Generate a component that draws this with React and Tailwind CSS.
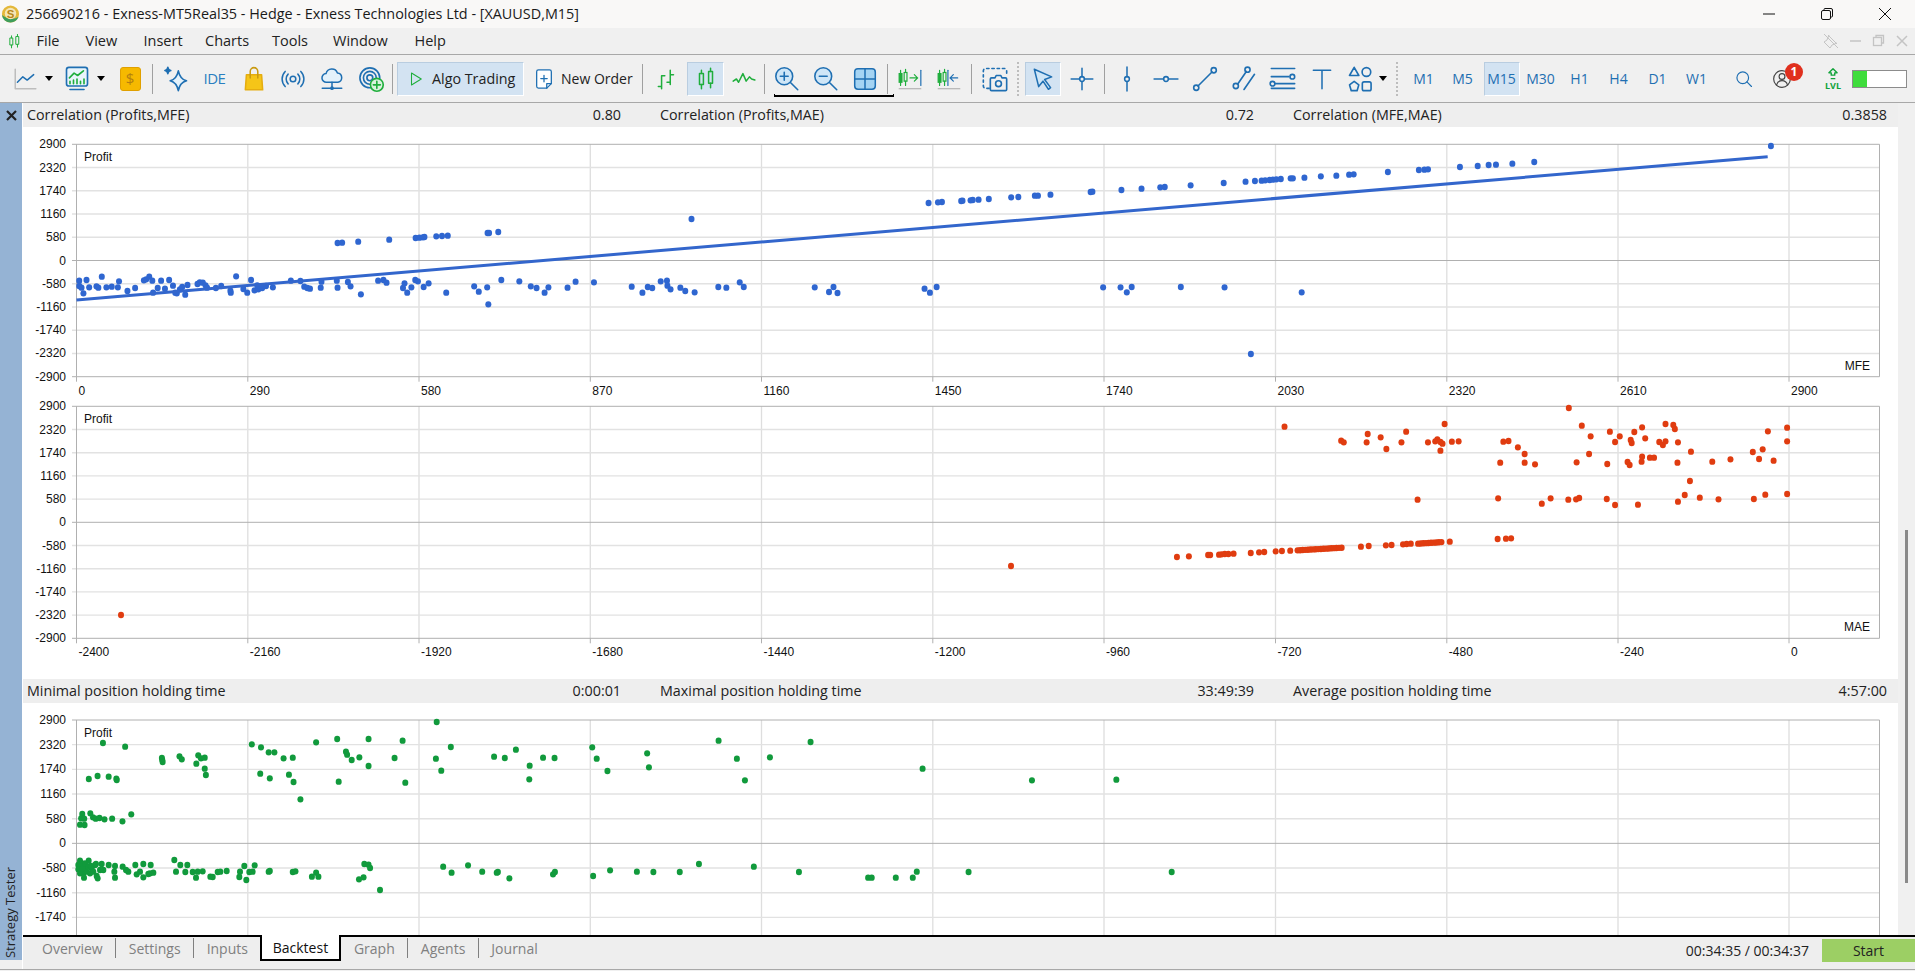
import React from 'react'

const BLUE = '#1f6fb2'
const GREEN = '#1fae3c'
const LIGHT = '#cfe6f7'

// dots were read from crops of the chart: x is scaled by sx, y always by 3
const crop = (ox, oy, sx, text) =>
  text.trim().split(/\s+/).map((pair) => {
    const [x, y] = pair.split(',').map(Number)
    return [ox + x / sx, oy + y / 3]
  })

const mfeDots = [
  ...crop(0, 130, 2.613, `207,452 207,468 213,473 218,490 226,450 233,472 252,469 257,473 266,440 278,472 292,470 308,472 311,454 333,483 353,474 376,451 382,448 390,440 398,452 400,488 412,474 421,452 431,476 442,450 452,467 458,488 462,490 470,478 484,494 490,465 476,471 516,462 522,457 530,458 537,466 541,473 564,474 578,468 602,482 603,488 617,439 636,477 646,488 656,450 665,481 675,478 672,466 685,474 695,468 713,472 760,452 785,453 795,470 803,474 810,476 838,473 840,455 880,452 882,473 909,456 916,469 943,493 988,452 1002,450 1010,458 1053,474 1057,460 1064,488 1075,472 1085,450 1092,454 1107,471 1120,460 1166,488 1239,469 1251,485 1273,472 1276,523 1310,450 1357,454 1387,469 1402,474 1423,488 1433,472 1483,473 1504,455 1552,457
    882,339 894,338 936,335 1017,329 1086,324 1096,323 1105,322 1109,321 1140,319 1155,318 1170,317 1274,309 1278,309 1302,306`),
  ...crop(600, 140, 2.24, `205,237 71,440 95,458 107,441 117,444 136,424 150,422 151,437 158,448 180,443 191,453 212,457 265,441 283,443 313,427 322,441 481,442 513,456 523,441 532,459 727,446 739,458 754,441 1127,442 1166,442 1180,457 1191,441 1301,441 1399,442 1458,642
    736,189 757,187 766,186 809,183 812,182 830,181 835,180 848,179 871,177 921,172 937,171 974,167 981,167 1009,164 1099,156 1103,155 1168,150 1213,146 1255,142 1265,141 1323,136 1397,129 1446,125 1467,123 1482,122 1490,121 1500,120 1507,119 1515,118 1525,117 1547,115 1552,115`),
  ...crop(1200, 130, 2.193, `229,143 265,139 299,137 327,134 337,133 412,126 480,120 492,119 500,118 570,111 609,108 633,105 649,104 685,101 733,96 1252,48 223,487`),
]

// the packed stretch of the MAE curve reads as one thick line
const maePacked = []
for (let x = 380; x <= 466; x += 5) maePacked.push(`${x},${451 - ((x - 380) / 86) * 8}`)
for (let x = 612; x <= 660; x += 5) maePacked.push(`${x},${431 - ((x - 612) / 48) * 5}`)

const maeDots = [
  ...crop(1100, 400, 1.924, `355,80 464,122 469,127 513,127 515,102 540,112 551,147 580,127 589,95 631,127 645,124 649,118 655,126 659,131 655,152 663,72 677,125 690,124 770,188 776,125 786,123 804,142 817,162 817,188 837,193 902,24 917,187 927,77 941,162 944,109 976,192 981,95 991,126 1000,109 1015,186 1019,195 1021,120 1023,129 1028,96 1042,185 1043,170 1043,82 1049,115 1058,173 1066,173 1076,126 1083,135 1088,124 1088,72 1103,75 1106,87 1111,188 1112,127 1137,155 1178,185 1213,178 1256,156 1268,177 1275,148 1285,94 1296,182 1322,83 1322,124
    611,299 766,295 850,311 867,295 901,299 916,298 922,294 975,297 991,315 1035,314 1112,305 1125,285 1135,243 1154,293 1190,298 1258,297 1280,284 1322,282
    148,471 171,469 208,465 212,465 229,464 234,463 240,462 247,462 257,461 290,459 306,457 316,456 338,454 350,453 366,452 502,440 517,438 550,436 561,435 583,433 590,432 598,431 673,425 765,417 781,416 791,415 ${maePacked.join(' ')}`),
  [1011, 566],
  [121, 615],
]

const timeDots = [
  ...crop(0, 700, 2.613, `269,129 327,140 232,237 255,228 284,230 304,236 305,240 423,174 424,180 425,186 469,169 475,178 518,166 525,175 535,173 513,191 535,206 538,225 658,133 682,142 702,157 717,157 741,175 765,173 680,221 705,235 755,224 767,246 785,298 826,127 881,117 885,245 904,155 907,164 919,180 939,172 963,117 963,198 1052,122 1031,174 1059,248 1141,66 1139,176 1178,141 1153,212 1291,170 1319,174 1348,149 1384,197 1383,238 1419,173 1449,174
    215,342 212,355 220,356 209,374 221,375 236,340 243,352 250,356 260,354 273,358 293,356 320,364 343,343
    702,515 705,513 765,516 772,514 815,530 826,518 832,530 938,538 950,532 952,492 963,494 967,504 993,570 1158,500 1180,518 1223,496 1260,515 1298,518 1301,516 1331,535 1445,523 1450,516`),
  ...crop(60, 840, 3, `60,62 58,80 65,70 62,90 70,100 72,113 75,85 80,95 86,62 90,100 95,85 105,75 110,108 113,115 125,72 120,90 130,90 146,75 165,78 188,80 198,90 205,95 163,95 165,113 226,75 230,103 240,95 250,72 250,112 272,75 270,100 280,98 265,102 343,60 361,75 382,75 348,95 376,96 398,96 408,113 413,95 428,94 451,110 458,111 473,96 481,95 500,93 540,95 538,111 553,78 559,120 568,96 578,95 584,76 55,75 55,88 60,100 68,85 75,70 85,80 92,78 100,95 108,72`),
  ...crop(590, 715, 2.24, `5,97 15,131 39,168 128,115 132,157 288,77 329,131 347,196 403,127 494,81 745,161 990,196 1179,194 7,483 45,466 105,470 142,471 201,471 244,447 367,455 468,471 623,488 631,488 685,488 723,488 732,470 848,471 1303,471`),
]

const yValues = [2900, 2320, 1740, 1160, 580, 0, -580, -1160, -1740, -2320, -2900]
const GRID_X = [76.5, 247.8, 419, 590.3, 761.5, 932.8, 1104, 1275.5, 1446.8, 1618, 1789]
const PLOT_LEFT = 76.5
const PLOT_RIGHT = 1879.5

function ScatterChart({ top, height, heightClass, plotTop, step, rows = 11, xLabels, axisName, color, dots, profitY, trend }) {
  const values = yValues.slice(0, rows)
  const zeroIndex = values.indexOf(0)
  const plotBottom = plotTop + step * (rows - 1)
  return (
    <svg className={`block w-[1875px] shrink-0 bg-white ${heightClass}`} viewBox={`23 ${top} 1875 ${height}`}>
      {GRID_X.slice(1, 11).map((x) => (
        <line key={x} x1={x} x2={x} y1={plotTop} y2={xLabels ? plotBottom : top + height} stroke="#dedede" strokeWidth="1.3" />
      ))}
      {values.map((v, i) => {
        const y = plotTop + i * step
        const strong = i === zeroIndex || i === 0 || i === 10
        return (
          <g key={v}>
            <line x1={72} x2={PLOT_RIGHT} y1={y} y2={y} stroke={strong ? '#b0b0b0' : '#e2e2e2'} strokeWidth={strong ? 1 : 1.4} />
            <text x="66" y={y + 4} textAnchor="end" className="fill-[#111] text-[12px]" fontFamily="Liberation Sans, sans-serif">{v}</text>
          </g>
        )
      })}
      <line x1={PLOT_LEFT} x2={PLOT_LEFT} y1={plotTop} y2={xLabels ? plotBottom : top + height} stroke="#b0b0b0" />
      <line x1={PLOT_RIGHT} x2={PLOT_RIGHT} y1={plotTop} y2={xLabels ? plotBottom : top + height} stroke="#b0b0b0" />
      {xLabels && xLabels.map((label, i) => (
        <g key={label}>
          <line x1={GRID_X[i]} x2={GRID_X[i]} y1={plotBottom} y2={plotBottom + 5} stroke="#b0b0b0" />
          <text x={GRID_X[i] + 2} y={plotBottom + 18} className="fill-[#111] text-[12px]" fontFamily="Liberation Sans, sans-serif">{label}</text>
        </g>
      ))}
      <text x="84" y={profitY} className="fill-[#111] text-[12px]" fontFamily="Liberation Sans, sans-serif">Profit</text>
      {axisName && (
        <text x="1870" y={plotBottom - 7} textAnchor="end" className="fill-[#111] text-[12px]" fontFamily="Liberation Sans, sans-serif">{axisName}</text>
      )}
      {dots.map(([x, y], i) => (
        <ellipse key={i} cx={x} cy={y} rx="3" ry="3.2" fill={color} />
      ))}
      {trend && <line x1={trend[0]} y1={trend[1]} x2={trend[2]} y2={trend[3]} stroke="#3366cc" strokeWidth="3" />}
    </svg>
  )
}

function StatRow({ cells }) {
  return (
    <div className="flex h-[24px] shrink-0 items-center bg-[#eeeeee] pl-[4px] text-[14.3px] text-[#222]">
      {cells.map(([label, value]) => (
        <div key={label} className="mr-[39px] flex w-[594px] shrink-0 justify-between">
          <span>{label}</span>
          <span>{value}</span>
        </div>
      ))}
    </div>
  )
}

function Icon({ size = 26, children, viewBox = '0 0 24 24' }) {
  return (
    <svg width={size} height={size} viewBox={viewBox} fill="none" stroke={BLUE} strokeWidth="1.4" strokeLinecap="round" strokeLinejoin="round">
      {children}
    </svg>
  )
}

function Slot({ w, children, active }) {
  return (
    <div className={`flex h-[34px] shrink-0 items-center justify-center ${w} ${active ? 'border border-[#b9cde0] border-r-white border-b-white bg-[#d3e3f2]' : ''}`}>
      {children}
    </div>
  )
}

const Sep = () => <div className="h-[30px] w-px shrink-0 bg-[#a0a0a0]" />
const DotSep = () => <div className="h-[34px] w-[2px] shrink-0 border-l-2 border-dotted border-[#bdbdbd]" />
const Gap = ({ w }) => <div className={`shrink-0 ${w}`} />
const Caret = () => <div className="h-0 w-0 border-x-[4.5px] border-t-[5px] border-x-transparent border-t-black" />

const Candles = ({ color = GREEN, size = 26 }) => (
  <Icon size={size}>
    <g stroke={color}>
      <rect x="6" y="7" width="3.6" height="10" />
      <rect x="14.4" y="5" width="3.6" height="11" />
      <path d="M7.8 4v3M7.8 17v4M16.2 2v3M16.2 16v4" />
    </g>
  </Icon>
)

const MoveIcon = ({ back }) => (
  <svg width="26" height="26" viewBox="0 0 24 24" fill="none" strokeWidth="1.1" strokeLinecap="round">
    <g stroke={GREEN}>
      <rect x="2" y="7" width="2.6" height="8" fill={GREEN} />
      <rect x="6.6" y="6" width="2.6" height="8" />
      <path d="M3.3 4v3M3.3 15v3M7.9 3v3M7.9 14v4" />
    </g>
    <path d={back ? 'M20 11h-7M16 8l-3 3 3 3' : 'M12 11h7M16 8l3 3-3 3'} stroke={back ? BLUE : GREEN} />
    <path d={back ? 'M11 4v14' : 'M22 4v14'} stroke={BLUE} />
    <path d="M2 21h20" stroke="#a8a8a8" />
  </svg>
)

function Toolbar() {
  return (
    <div className="relative flex h-[49px] shrink-0 items-center border-t border-b border-[#a8a8a8] bg-[#f0f0f0] pl-[12px]">
      <Slot w="w-[26px]">
        <Icon size={26}><path d="M3 3v18h19" stroke="#bdbdbd" /><path d="M5 15l5-5 4 3 6-5" /></Icon>
      </Slot>
      <Slot w="w-[22px]"><Caret /></Slot>
      <Slot w="w-[34px]">
        <Icon size={28}>
          <rect x="3" y="2" width="18" height="16" rx="2" fill="#e9f4fb" />
          <path d="M5.5 11l4-4 3 2 5-4" stroke={GREEN} />
          <path d="M6 16v-2M9 16v-3M12 16v-4M15 16v-2M18 16v-4" stroke={GREEN} />
          <path d="M6 21h12" />
        </Icon>
      </Slot>
      <Slot w="w-[14px]"><Caret /></Slot>
      <Slot w="w-[44px]">
        <div className="flex h-[24px] w-[21px] items-center justify-center rounded-[3px] border border-[#e0a000] bg-[#f6b900] text-[15px] text-[#b47f10]">$</div>
      </Slot>
      <Sep />
      <Gap w="w-[3px]" />
      <Slot w="w-[39px]">
        <Icon size={28}>
          <path d="M14 5c1 5 3 7.5 7 8.5-4 1-6 3.5-7 8.5-1-5-3-7.5-7-8.5 4-1 6-3.5 7-8.5z" fill="#e4f2fb" />
          <path d="M5 2c.3 1.7 1 2.4 2.5 2.7C6 5 5.3 5.7 5 7.4 4.7 5.7 4 5 2.5 4.7 4 4.4 4.7 3.7 5 2z" fill={BLUE} />
        </Icon>
      </Slot>
      <Slot w="w-[39px]"><span className="text-[15px] tracking-[-0.5px] text-[#2a7fc0]">IDE</span></Slot>
      <Slot w="w-[39px]">
        <Icon size={26}>
          <path d="M5 8h14l1 14H4z" fill="#f5c518" stroke="#e5ad10" />
          <path d="M8.5 11V5a3.5 3.5 0 0 1 7 0v6" stroke="#c99a10" />
        </Icon>
      </Slot>
      <Slot w="w-[39px]">
        <Icon size={26}>
          <circle cx="12" cy="12" r="2.6" />
          <path d="M7.5 7.5a6.5 6.5 0 0 0 0 9M16.5 7.5a6.5 6.5 0 0 1 0 9M4.8 5a10 10 0 0 0 0 14M19.2 5a10 10 0 0 1 0 14" />
        </Icon>
      </Slot>
      <Slot w="w-[39px]">
        <Icon size={26}>
          <path d="M7 15a4 4 0 0 1-.5-8A5.5 5.5 0 0 1 17 6.5a4.3 4.3 0 0 1 .5 8.5z" fill="#e4f2fb" />
          <path d="M12 15v5M3 20.5h18" />
          <circle cx="12" cy="20.5" r="1" fill={BLUE} />
        </Icon>
      </Slot>
      <Slot w="w-[39px]">
        <Icon size={28}>
          <circle cx="11" cy="11" r="8.5" />
          <circle cx="11" cy="11" r="5.5" />
          <circle cx="11" cy="11" r="2.5" />
          <circle cx="17" cy="17" r="5.5" fill="#d8f2dc" stroke={GREEN} />
          <path d="M17 14v6M14 17h6" stroke={GREEN} />
        </Icon>
      </Slot>
      <Gap w="w-[2px]" />
      <Sep />
      <div className="ml-[4px] flex h-[34px] w-[127px] shrink-0 items-center border border-[#b9cde0] border-r-white border-b-white bg-[#d3e3f2] pl-[9px] text-[14.3px] text-[#222]">
        <Icon size={18}><path d="M6 4l13 8-13 8z" stroke={GREEN} /></Icon>
        <span className="ml-[7px] whitespace-nowrap">Algo Trading</span>
      </div>
      <div className="flex w-[118px] shrink-0 items-center pl-[9px] text-[14px] text-[#222]">
        <Icon size={22}>
          <path d="M6 2h12a2 2 0 0 1 2 2v13l-5 5H6a2 2 0 0 1-2-2V4a2 2 0 0 1 2-2z" fill="#fff" />
          <path d="M12 8v7M8.5 11.5h7M20 17h-5v5" />
        </Icon>
        <span className="ml-[6px] whitespace-nowrap">New Order</span>
      </div>
      <Sep />
      <Gap w="w-[4px]" />
      <Slot w="w-[40px]">
        <Icon size={26}><path d="M4 19h3M7 21V9M7 9h3M15 15h-3M15 17V4M15 8h3" stroke={GREEN} /></Icon>
      </Slot>
      <Slot w="w-[37px]" active><Candles /></Slot>
      <Slot w="w-[40px]">
        <Icon size={26}><path d="M2 14l3-2 2 3 4-8 3 7 3-4 2 2 3 1" stroke={GREEN} /></Icon>
      </Slot>
      <Sep />
      <Gap w="w-[2px]" />
      <Slot w="w-[38px]">
        <Icon size={27}>
          <circle cx="10" cy="10" r="7.5" fill={LIGHT} />
          <path d="M10 6.5v7M6.5 10h7M15.5 15.5L22 22" />
        </Icon>
      </Slot>
      <Slot w="w-[41px]">
        <Icon size={27}>
          <circle cx="10" cy="10" r="7.5" fill={LIGHT} />
          <path d="M6.5 10h7M15.5 15.5L22 22" />
        </Icon>
      </Slot>
      <Slot w="w-[38px]">
        <Icon size={26}>
          <rect x="2.5" y="2.5" width="19" height="19" rx="3" fill="#a5d4f3" />
          <path d="M12 2.5v19M2.5 12h19" />
        </Icon>
      </Slot>
      <Gap w="w-[3px]" />
      <Sep />
      <Slot w="w-[44px]"><MoveIcon /></Slot>
      <Slot w="w-[34px]"><MoveIcon back /></Slot>
      <Gap w="w-[5px]" />
      <Sep />
      <Slot w="w-[45px]">
        <Icon size={28}>
          <path d="M7 20H4a2 2 0 0 1-2-2V5a2 2 0 0 1 2-2h16a2 2 0 0 1 2 2v4" strokeDasharray="2 2.5" />
          <path d="M9 11h3l1-2h4l1 2h3a1 1 0 0 1 1 1v9a1 1 0 0 1-1 1H9a1 1 0 0 1-1-1v-9a1 1 0 0 1 1-1z" />
          <circle cx="15" cy="16" r="2.5" />
        </Icon>
      </Slot>
      <DotSep />
      <Gap w="w-[6px]" />
      <Slot w="w-[36px]" active>
        <Icon size={26}><path d="M4 3l16 7-6.5 2.5L19 20l-2 1.5-5-7.5-4 5z" fill={LIGHT} /></Icon>
      </Slot>
      <Slot w="w-[42px]">
        <Icon size={26}><circle cx="12" cy="12" r="2.2" /><path d="M12 2v7.800M12 14.200V22M2 12h7.800M14.200 12H22" /></Icon>
      </Slot>
      <Gap w="w-px" />
      <Sep />
      <Slot w="w-[44px]"><Icon size={26}><circle cx="12" cy="12" r="2.2" /><path d="M12 1v8.800M12 14.200V23" /></Icon></Slot>
      <Slot w="w-[34px]"><Icon size={26}><circle cx="12" cy="12" r="2.2" /><path d="M1 12h8.800M14.200 12H23" /></Icon></Slot>
      <Slot w="w-[44px]"><Icon size={28}><circle cx="4.5" cy="19.5" r="2.2" /><circle cx="19.5" cy="4.5" r="2.2" /><path d="M6 18L18 6" /></Icon></Slot>
      <Slot w="w-[34px]"><Icon size={28}><circle cx="5" cy="18" r="2.2" /><circle cx="15" cy="4" r="2.2" /><path d="M6.5 16.5L14 5.5M21 8l-9 13" /></Icon></Slot>
      <Slot w="w-[44px]">
        <Icon size={28}>
          <path d="M2 3h20M2 10h15M2 20h20" />
          <circle cx="20" cy="10" r="2" />
          <path d="M5 16h17" />
          <circle cx="3" cy="16" r="2" />
        </Icon>
      </Slot>
      <Slot w="w-[34px]"><Icon size={26}><path d="M4 4h16M12 4v17" /></Icon></Slot>
      <Gap w="w-[3px]" />
      <Slot w="w-[36px]">
        <Icon size={28}>
          <path d="M7 2l4 7H3z" />
          <circle cx="17.5" cy="6" r="3.7" />
          <path d="M7 14l4 3-1.500 5h-5L3 17z" />
          <rect x="14" y="14.5" width="7.5" height="7.5" rx="1.5" />
        </Icon>
      </Slot>
      <Slot w="w-[10px]"><Caret /></Slot>
      <Gap w="w-[8px]" />
      <DotSep />
      <Gap w="w-[6px]" />
      {['M1', 'M5', 'M15', 'M30', 'H1', 'H4', 'D1', 'W1'].map((label) => (
        <div key={label} className="flex w-[39px] shrink-0 justify-center">
          <div className={`flex h-[34px] w-[36px] items-center justify-center whitespace-nowrap text-[14px] text-[#1f6fb2] ${label === 'M15' ? 'border border-[#b9cde0] border-r-white border-b-white bg-[#d3e3f2]' : ''}`}>
            {label}
          </div>
        </div>
      ))}
      <Slot w="w-[55px]"><Icon size={20}><circle cx="10.5" cy="10.5" r="7" /><path d="M15.5 15.5L21 21" /></Icon></Slot>
      <div className="relative flex w-[22px] shrink-0 justify-center">
        <Icon size={20}>
          <g stroke="#444">
            <circle cx="12" cy="12" r="10" />
            <circle cx="12" cy="9" r="3.5" />
            <path d="M5.5 19c1-3.5 3.5-5 6.5-5s5.5 1.5 6.5 5" />
          </g>
        </Icon>
        <div className="absolute top-[-6px] left-[14px] flex h-[18px] w-[18px] items-center justify-center rounded-full bg-[#e0301e] text-[12px] font-bold text-white">1</div>
      </div>
      <div className="ml-[25px] flex w-[30px] shrink-0 flex-col items-center text-[9px] leading-[10px] font-bold text-[#12a33a]">
        <Icon size={14}><path d="M12 3l7 7h-4v4H9v-4H5zM9 20h6" stroke="#12a33a" strokeWidth="2.4" /></Icon>
        <span>LVL</span>
      </div>
      <div className="ml-[4px] flex h-[18px] w-[55px] shrink-0 border border-[#8c8c8c] bg-white">
        <div className="w-[14px] bg-[#3fdc3c]" />
      </div>
      <div className="absolute top-[39px] left-[774px] h-[3px] w-[120px] border-x border-b-2 border-black" />
    </div>
  )
}

function TitleBar() {
  return (
    <div className="flex h-[28px] shrink-0 items-center bg-[#f9f8f7] text-[14.4px] text-[#1a1a1a]">
      <svg width="19" height="20" viewBox="0 0 20 20" className="ml-[1px] shrink-0">
        <circle cx="10" cy="10" r="9" fill="#e4b83a" />
        <path d="M1 11a9 9 0 0 0 9 8c4 0 7-2 8.5-6-4 3-11 3-17.5-2z" fill="#3f9e5c" />
        <circle cx="10" cy="9.5" r="6" fill="#f5e6b5" />
        <text x="10" y="14" textAnchor="middle" fontSize="12" fontWeight="700" fill="#b8861a" fontFamily="Liberation Sans, sans-serif">S</text>
      </svg>
      <span className="ml-[6px] whitespace-nowrap">256690216 - Exness-MT5Real35 - Hedge - Exness Technologies Ltd - [XAUUSD,M15]</span>
      <div className="ml-auto flex items-center">
        <div className="flex w-[58px] justify-center">
          <svg width="14" height="14" viewBox="0 0 14 14"><path d="M1 7h12" stroke="#111" /></svg>
        </div>
        <div className="flex w-[58px] justify-center">
          <svg width="14" height="14" viewBox="0 0 14 14" fill="none" stroke="#111"><rect x="1.5" y="3.5" width="9" height="9" rx="1.5" /><path d="M4 3V2.5a1 1 0 0 1 1-1h6a1.5 1.5 0 0 1 1.5 1.5v6a1 1 0 0 1-1 1H11" /></svg>
        </div>
        <div className="mr-px flex w-[58px] justify-center">
          <svg width="14" height="14" viewBox="0 0 14 14"><path d="M1 1l12 12M13 1L1 13" stroke="#111" /></svg>
        </div>
      </div>
    </div>
  )
}

function MenuBar() {
  const items = [
    ['File', 'w-[49px]'],
    ['View', 'w-[58px]'],
    ['Insert', 'w-[61.5px]'],
    ['Charts', 'w-[67px]'],
    ['Tools', 'w-[61px]'],
    ['Window', 'w-[81.5px]'],
    ['Help', 'w-[60px]'],
  ]
  return (
    <div className="flex h-[26px] shrink-0 items-center bg-[#f0f0f0] text-[14.5px] text-[#222]">
      <div className="ml-[6px] w-[30.5px] shrink-0">
        <Candles size={17} />
      </div>
      {items.map(([label, w]) => (
        <div key={label} className={`shrink-0 ${w}`}>{label}</div>
      ))}
      <div className="mr-[5px] ml-auto flex items-center gap-[7px]">
        <div className="w-[19px]">
          <svg width="18" height="18" viewBox="0 0 18 18" fill="none" stroke="#c4c4c4"><path d="M2 2l14 14M6 3l9 9M7 3l-2 5-3 2 6 6 2-3 5-2" /></svg>
        </div>
        <svg width="16" height="14" viewBox="0 0 16 14"><path d="M2 7h11" stroke="#c4c4c4" strokeWidth="1.5" /></svg>
        <svg width="16" height="14" viewBox="0 0 16 14" fill="none" stroke="#c4c4c4" strokeWidth="1.3"><rect x="2.5" y="3.5" width="8" height="8" /><path d="M5 3V1.5h7.5V9H11" /></svg>
        <svg width="16" height="14" viewBox="0 0 16 14"><path d="M3 2l10 10M13 2L3 12" stroke="#c4c4c4" strokeWidth="1.5" /></svg>
      </div>
    </div>
  )
}

function TabBar() {
  const before = ['Overview', 'Settings', 'Inputs']
  const after = ['Graph', 'Agents', 'Journal']
  return (
    <div className="flex h-[34px] shrink-0 border-t-2 border-black bg-[#eeeeee] text-[14px] text-[#808080]">
      <div className="flex h-[22px] items-center pl-[19px]">
        {before.map((tab, i) => (
          <React.Fragment key={tab}>
            <span>{tab}</span>
            {i < 2 && <span className="mx-[12.5px] h-[20px] w-px bg-[#808080]" />}
          </React.Fragment>
        ))}
      </div>
      <div className="mt-[-2px] ml-[12px] flex h-[26px] w-[81px] items-center justify-center border-x-2 border-b-2 border-black bg-white text-[#111]">
        Backtest
      </div>
      <div className="flex h-[22px] items-center pl-[13px]">
        {after.map((tab, i) => (
          <React.Fragment key={tab}>
            <span>{tab}</span>
            {i < 2 && <span className="mx-[12.5px] h-[20px] w-px bg-[#808080]" />}
          </React.Fragment>
        ))}
      </div>
      <div className="mt-px ml-auto flex h-[24px] items-center">
        <span className="mr-[13px] text-[14px] text-[#222]">00:34:35 / 00:34:37</span>
        <div className="flex h-[23px] w-[93px] items-center justify-center bg-[#9ccf64] text-[14px] text-[#222]">Start</div>
      </div>
    </div>
  )
}

export default function App() {
  return (
    <div className="flex h-[971px] w-[1915px] flex-col overflow-hidden bg-[#f0f0f0] font-['Open_Sans',sans-serif]">
      <TitleBar />
      <MenuBar />
      <Toolbar />
      <div className="mb-px flex min-h-0 flex-1 border-b border-[#a8a8a8]">
        <div className="mb-[9px] flex w-[22px] shrink-0 flex-col items-center justify-between bg-[#95b3d4] pt-[7px] pb-[2px]">
          <svg width="11" height="11" viewBox="0 0 11 11"><path d="M1 1l9 9M10 1l-9 9" stroke="#222" strokeWidth="2.2" /></svg>
          <span className="rotate-180 text-[13px] whitespace-nowrap text-[#222] [writing-mode:vertical-rl]">Strategy Tester</span>
        </div>
        <div className="w-px shrink-0 bg-white" />
        <div className="flex min-w-0 flex-1 flex-col">
          <div className="flex min-h-0 flex-1">
            <div className="flex w-[1875px] shrink-0 flex-col overflow-hidden">
              <StatRow cells={[['Correlation (Profits,MFE)', '0.80'], ['Correlation (Profits,MAE)', '0.72'], ['Correlation (MFE,MAE)', '0.3858']]} />
              <ScatterChart
                top={127}
                height={272}
                heightClass="h-[272px]"
                plotTop={144.3}
                step={23.24}
                xLabels={['0', '290', '580', '870', '1160', '1450', '1740', '2030', '2320', '2610', '2900']}
                axisName="MFE"
                color="#2f66d0"
                dots={mfeDots}
                profitY={161}
                trend={[76.5, 300, 1767.7, 156.7]}
              />
              <ScatterChart
                top={399}
                height={280}
                heightClass="h-[280px]"
                plotTop={406.3}
                step={23.2}
                xLabels={['-2400', '-2160', '-1920', '-1680', '-1440', '-1200', '-960', '-720', '-480', '-240', '0']}
                axisName="MAE"
                color="#e03c10"
                dots={maeDots}
                profitY={423}
              />
              <StatRow cells={[['Minimal position holding time', '0:00:01'], ['Maximal position holding time', '33:49:39'], ['Average position holding time', '4:57:00']]} />
              <ScatterChart
                top={703}
                height={232}
                heightClass="h-[232px]"
                plotTop={720}
                step={24.67}
                rows={9}
                color="#119a3c"
                dots={timeDots}
                profitY={737}
              />
            </div>
            <div className="flex w-[17px] shrink-0 flex-col items-center pt-[427px]">
              <div className="h-[353px] w-[3px] bg-[#8a8a8a]" />
            </div>
          </div>
          <TabBar />
        </div>
      </div>
    </div>
  )
}
